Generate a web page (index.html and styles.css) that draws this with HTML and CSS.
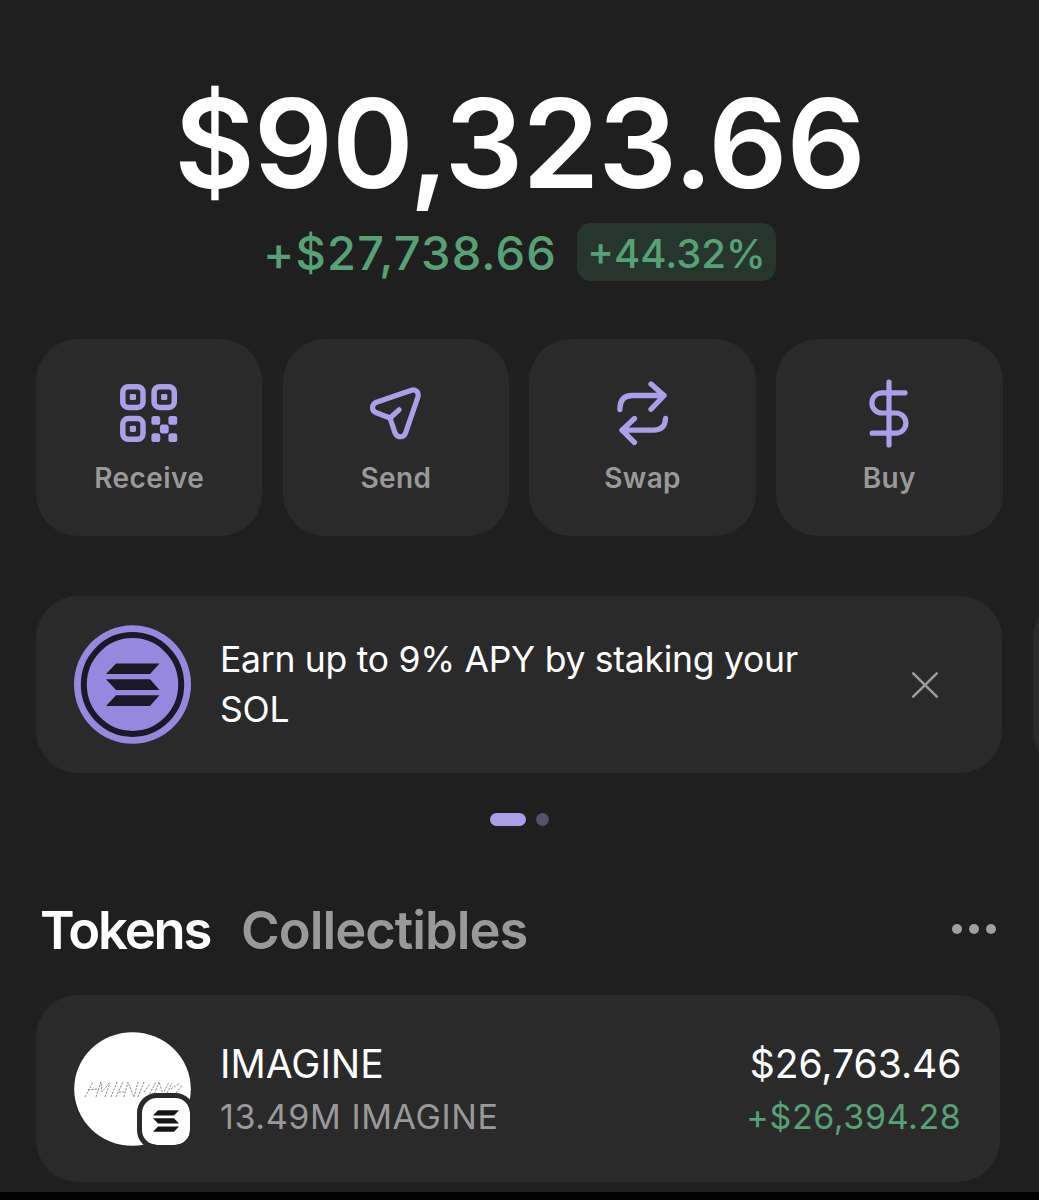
FILE: index.html
```html
<!DOCTYPE html>
<html lang="en">
<head>
<meta charset="utf-8">
<title>Wallet</title>
<link rel="stylesheet" href="styles.css">
</head>
<body>
<main class="wallet">
  <header class="summary">
    <h1 class="balance">$90,323.66</h1>
    <div class="change">
      <span class="change-amount">+$27,738.66</span>
      <span class="change-badge"><span class="change-percent">+44.32%</span></span>
    </div>
  </header>

  <nav class="actions">
    <button class="action">
      <svg class="action-icon" viewBox="0 0 80 80">
        <g fill="none" stroke="currentColor" stroke-width="5.5">
          <rect x="13.800" y="15.700" width="20.200" height="20.700" rx="5.500"/>
          <rect x="45.100" y="15.700" width="20.200" height="20.700" rx="5.500"/>
          <rect x="13.800" y="47.600" width="20.200" height="20.700" rx="5.500"/>
        </g>
        <g fill="currentColor">
          <rect x="20.800" y="22.900" width="6.200" height="6.200" rx="1.400"/>
          <rect x="52.100" y="22.900" width="6.200" height="6.200" rx="1.400"/>
          <rect x="20.800" y="54.800" width="6.200" height="6.200" rx="1.400"/>
          <rect x="42.400" y="45" width="8.800" height="8.800" rx="2.600"/>
          <rect x="59.400" y="45" width="8.800" height="8.800" rx="2.600"/>
          <rect x="50.900" y="53.600" width="8.800" height="8.800" rx="2.600"/>
          <rect x="42.400" y="62.200" width="8.800" height="8.800" rx="2.600"/>
          <rect x="59.400" y="62.200" width="8.800" height="8.800" rx="2.600"/>
        </g>
      </svg>
      <span class="action-label">Receive</span>
    </button>
    <button class="action">
      <svg class="action-icon" viewBox="0 0 80 80">
        <path d="M55.500 19.200 20.500 31.200C15.500 33.500 15.300 39.500 19.700 41.500L34 47 39 61.800C41.200 67.200 47.800 67 49.600 61.800L61.800 26.500C63.200 21.500 60.200 18 55.500 19.200ZM34 47 43 38.800" fill="none" stroke="currentColor" stroke-width="5.200" stroke-linecap="round" stroke-linejoin="round"/>
      </svg>
      <span class="action-label">Send</span>
    </button>
    <button class="action">
      <svg class="action-icon" viewBox="0 0 80 80">
        <path d="M16.900 38.500V37.500Q17.300 24.500 29 24.500H61M48 13 61 24.500 48 38.300M62.500 47.500Q62 59.200 50.500 59.200H19M31.500 47.500 19 59.200 31.500 71.500" fill="none" stroke="currentColor" stroke-width="5.300" stroke-linecap="round" stroke-linejoin="round"/>
      </svg>
      <span class="action-label">Swap</span>
    </button>
    <button class="action">
      <svg class="action-icon" viewBox="0 0 80 80">
        <path d="M40 11V74M56 21.800H33A10.100 10.100 0 0 0 33 42H46.800A10.100 10.100 0 0 1 46.800 62.200H23.200" fill="none" stroke="currentColor" stroke-width="5.200" stroke-linecap="round" stroke-linejoin="round"/>
      </svg>
      <span class="action-label">Buy</span>
    </button>
  </nav>

  <section class="carousel">
    <article class="promo">
      <svg class="promo-logo" viewBox="0 0 117 119">
        <ellipse cx="58.500" cy="59.500" rx="58.500" ry="59.300" fill="#9688de"/>
        <ellipse cx="58.500" cy="59.500" rx="48.700" ry="49.400" fill="none" stroke="#1b1925" stroke-width="6"/>
        <path d="M42 38.500H85.500L76 49H32ZM32 54.300H76L85.500 65H42ZM42 70.200H85.500L76 81H32Z" fill="#1b1925"/>
      </svg>
      <p class="promo-text">Earn up to 9% APY by staking your SOL</p>
      <svg class="promo-close" viewBox="0 0 30 30">
        <path d="M3.200 3.300 26.800 26.700M26.800 3.300 3.200 26.700" fill="none" stroke="#9b9b9b" stroke-width="2.600" stroke-linecap="round"/>
      </svg>
    </article>
    <article class="promo promo-next"></article>
  </section>
  <div class="pager"><span class="pager-dot pager-dot-active"></span><span class="pager-dot"></span></div>

  <div class="tabs">
    <h2 class="tab tab-active">Tokens</h2>
    <h2 class="tab tab-second">Collectibles</h2>
    <div class="more"><i></i><i></i><i></i></div>
  </div>

  <section class="token">
    <div class="token-logo">
      <svg class="token-image" viewBox="0 0 117 114">
        <ellipse cx="58.500" cy="57" rx="58.300" ry="56.800" fill="#fff"/>
        <g fill="none" stroke="#777" stroke-width=".9" stroke-dasharray="2.200 1.300">
          <path d="M11 65 19 50M14 58 23 57M22 65 27 50 28 60 36 50M31 65 36 51M37 65 43 50M42 65 49 50M45 60 50 60M50 65 54 50 60 65 64 50M64 65 70 50M70 60 76 52M74 65 82 50M79 65 85 50 89 62 95 50M93 61 98 51M97 57 106 51M102 61 108 53"/>
        </g>
      </svg>
      <span class="chain-badge">
        <svg viewBox="0 0 26 22"><path d="M5 .3H26L21 5.400H0ZM0 8.300H21L26 13.600H5ZM5 16.500H26L21 21.800H0Z" fill="#151515"/></svg>
      </span>
    </div>
    <div class="token-info">
      <div class="token-name">IMAGINE</div>
      <div class="token-amount">13.49M IMAGINE</div>
    </div>
    <div class="token-value">
      <div class="token-price">$26,763.46</div>
      <div class="token-gain">+$26,394.28</div>
    </div>
  </section>
  <div class="bottom-bar"></div>
</main>
</body>
</html>
```
FILE: styles.css
```css
* { box-sizing: border-box; margin: 0; }
body {
  background: #1f1f1f;
  color: #fff;
  font-family: Inter, "Liberation Sans", sans-serif;
  white-space: nowrap;
}
svg { display: block; flex: none; }
.wallet {
  display: flex;
  flex-direction: column;
  width: 1039px;
  height: 1200px;
  padding-top: 68px;
  overflow: hidden;
}
.summary { display: flex; flex-direction: column; align-items: center; }
.balance {
  height: 155px;
  line-height: 151px;
  font-size: 124px;
  font-weight: 600;
  letter-spacing: -1.150px;
}
.change { display: flex; gap: 20px; height: 58px; line-height: 58px; }
.change-amount {
  padding-top: 1px;
  color: #56a274;
  font-size: 47px;
  font-weight: 500;
  letter-spacing: 1.150px;
}
.change-badge {
  width: 199px;
  border-radius: 14px;
  background: #26362c;
  color: #56a274;
  text-align: center;
}
.change-percent { display: block; padding-top: 2px; font-size: 40px; font-weight: 500; }

.actions {
  display: grid;
  grid-template-columns: repeat(4, 1fr);
  gap: 20.3px;
  height: 197px;
  margin: 58px 36.500px 0 36px;
}
.action {
  display: flex;
  flex-direction: column;
  align-items: center;
  padding: 32px 0 0;
  border: 0;
  border-radius: 42px;
  background: #2a2a2a;
  color: #ab9fe9;
  font: inherit;
}
.action-icon { width: 80px; height: 80px; }
.action-label {
  height: 50px;
  margin-top: 2px;
  line-height: 50px;
  color: #999;
  font-size: 28px;
  font-weight: 600;
  letter-spacing: .400px;
}

.carousel { display: flex; gap: 31px; height: 177px; margin: 60px 0 0 36px; }
.promo {
  display: flex;
  flex: none;
  align-items: center;
  width: 966px;
  padding: 0 62px 0 38px;
  border-radius: 42px;
  background: #2a2a2a;
}
.promo-logo { width: 117px; height: 119px; }
.promo-text {
  width: 620px;
  margin-left: 29px;
  line-height: 49.700px;
  font-size: 35.500px;
  letter-spacing: -.270px;
  white-space: normal;
}
.promo-close { width: 30px; height: 30px; margin-left: auto; }
.pager { display: flex; gap: 10px; height: 13px; margin: 40px 0 0 490px; }
.pager-dot { width: 12.500px; border-radius: 7px; background: #55506b; }
.pager-dot-active { width: 36px; background: #ab9fe9; }

.tabs {
  display: flex;
  align-items: center;
  height: 70px;
  margin: 69px 43px 0 40px;
  line-height: 70px;
}
.tab { font-size: 52.500px; font-weight: 600; }
.tab-active { width: 170px; letter-spacing: -2.200px; }
.tab-second { margin-left: 31px; color: #999; letter-spacing: -1px; }
.more { display: flex; gap: 7px; margin-left: auto; padding-bottom: 2px; }
.more i { width: 10px; height: 10px; border-radius: 50%; background: #a0a0a0; }

.token {
  display: flex;
  height: 187px;
  margin: 29.500px 39.500px 0 36px;
  padding: 37px 38px 0;
  border-radius: 42px;
  background: #2a2a2a;
}
.token-logo { position: relative; width: 117px; height: 114px; }
.token-image { width: 117px; height: 114px; }
.chain-badge {
  position: absolute;
  top: 61px;
  left: 63px;
  display: flex;
  align-items: center;
  justify-content: center;
  width: 58px;
  height: 57px;
  border: 5px solid #2a2a2a;
  border-radius: 20px;
  background: #fff;
  background-clip: padding-box;
}
.chain-badge svg { width: 26px; height: 22px; }
.token-info { margin-left: 29px; }
.token-value { margin-left: auto; text-align: right; }
.token-name, .token-price { height: 54px; line-height: 64px; font-size: 39px; }
.token-amount, .token-gain { line-height: 61px; font-size: 34px; letter-spacing: .620px; }
.token-amount { color: #999; }
.token-gain { color: #56a274; }
.bottom-bar { flex: none; height: 8px; margin-top: auto; background: #000; }
```
